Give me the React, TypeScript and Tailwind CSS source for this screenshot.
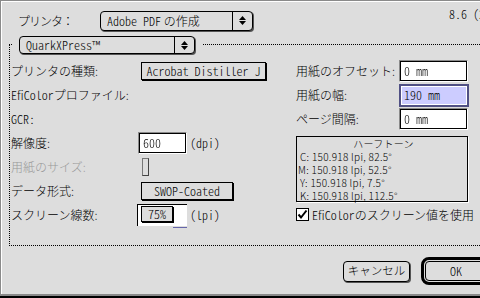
import React from 'react';

const hw = "[font-feature-settings:'hwid']";

const UpDown: React.FC = () => (
  <svg width="7" height="9" viewBox="0 0 7 9">
    <path d="M3.5 0 L7 4 L0 4 Z M0 5 L7 5 L3.5 9 Z" fill="#000" />
  </svg>
);

const Popup: React.FC<{ w: string; h: string; children: React.ReactNode }> = ({ w, h, children }) => (
  <div className={`${w} ${h} shrink-0 flex border border-black rounded-[4px] shadow-[1px_1px_0_#555] bg-[#dddddd]`}>
    <div className="flex-1 flex items-center pl-[6px] whitespace-nowrap">{children}</div>
    <div className="w-[20px] flex items-center justify-center border-l border-black">
      <UpDown />
    </div>
  </div>
);

const Button: React.FC<{ w: string; children: React.ReactNode }> = ({ w, children }) => (
  <div className={`${w} h-[18px] shrink-0 flex items-center justify-center border border-black bg-[#dddddd] shadow-[1px_1px_0_#000] whitespace-nowrap ${hw}`}>
    {children}
  </div>
);

// sunken white text field
const Field: React.FC<{ w: string; children?: React.ReactNode }> = ({ w, children }) => (
  <div className={`${w} h-[22px] shrink-0 border-t border-l border-[#8a8a8a] border-r-white border-b-white border-r border-b`}>
    <div className="h-full flex items-center border border-black bg-white pl-[3px] whitespace-nowrap">
      <span className={`text-black [will-change:opacity] ${hw}`}>{children}</span>
    </div>
  </div>
);

const Row: React.FC<{ children: React.ReactNode; className?: string }> = ({ children, className = '' }) => (
  <div className={`h-[24px] flex items-center whitespace-nowrap ${className}`}>{children}</div>
);

const App: React.FC = () => {
  return (
    <div className="w-[480px] h-[298px] bg-black overflow-hidden font-['Noto_Sans_CJK_JP',sans-serif] font-light text-[12px] leading-none text-black">
      <div className="h-[296px] border-t border-l border-b-2 border-[#8a8a8a] bg-[#dddddd]">
        <div className="h-full border-t border-l border-white overflow-hidden">
          {/* printer popup */}
          <div className="mt-[8px] flex items-center h-[21px]">
            <div className="w-[98px] shrink-0 pl-[16px] tracking-[-1px]">プリンタ：</div>
            <Popup w="w-[153px]" h="h-[20px]">
              <span className={hw}>Adobe PDF</span>
              <span>&nbsp;の作成</span>
            </Popup>
            <div className={`ml-[196px] -mt-[14px] shrink-0 whitespace-nowrap ${hw}`}>8.6 (2</div>
          </div>

          {/* group box */}
          <div className="mt-[13px] ml-[7px] mr-[-10px] h-[202px] border border-r-0 border-dotted border-black">
            <div className="-mt-[9px] ml-[3px] w-fit bg-[#dddddd] pl-[6px] pr-[7px]">
              <Popup w="w-[176px]" h="h-[18px]">
                <span className={hw}>QuarkXPress™</span>
              </Popup>
            </div>

            <div className="mt-[5px] flex">
              {/* left column */}
              <div className="w-[286px] shrink-0 pl-[1px]">
                <Row>
                  <div className="w-[130px] shrink-0">プリンタの種類:</div>
                  <Button w="w-[125px]">Acrobat Distiller J</Button>
                </Row>
                <Row>
                  <div><span className={hw}>EfiColor</span>プロファイル:</div>
                </Row>
                <Row>
                  <div className={hw}>GCR:</div>
                </Row>
                <Row>
                  <div className="w-[127px] shrink-0">解像度:</div>
                  <Field w="w-[49px]">600</Field>
                  <span className={`ml-[3px] ${hw}`}>(dpi)</span>
                </Row>
                <Row>
                  <div className="w-[131px] shrink-0 text-[#999999]">用紙のサイズ:</div>
                  <div className="w-[7px] h-[18px] shrink-0 border border-[#777] border-r-[#444] border-b-[#444] bg-[#dddddd]" />
                </Row>
                <Row>
                  <div className="w-[130px] shrink-0">データ形式:</div>
                  <Button w="w-[92px]">SWOP-Coated</Button>
                </Row>
                <Row>
                  <div className="w-[126px] shrink-0">スクリーン線数:</div>
                  <div className="relative w-[50px] h-[22px] shrink-0 border-t border-l border-black bg-white pl-[3px] pt-[1px]">
                    <div className={`w-[32px] h-[16px] flex items-center justify-center border border-black shadow-[1px_1px_0_#000] bg-[#dddddd] ${hw}`}>
                      75%
                    </div>
                    <div className="absolute right-0 -bottom-[2px] w-[14px] h-[1px] bg-[#6666aa]" />
                  </div>
                  <span className={`ml-[3px] ${hw}`}>(lpi)</span>
                </Row>
              </div>

              {/* right column */}
              <div className="w-[200px] shrink-0">
                <Row>
                  <div className="w-[103px] shrink-0">用紙のオフセット:</div>
                  <Field w="w-[69px]">0 mm</Field>
                </Row>
                <Row>
                  <div className="w-[103px] shrink-0">用紙の幅:</div>
                  <div className="w-[70px] h-[23px] shrink-0 border-2 border-[#505084] bg-white p-[1px]">
                    <div className={`h-full flex items-center bg-[#ccccff] pl-[2px] ${hw}`}>190 mm</div>
                  </div>
                </Row>
                <Row>
                  <div className="w-[103px] shrink-0">ページ間隔:</div>
                  <Field w="w-[69px]">0 mm</Field>
                </Row>
                <div className="mt-[5px] w-[172px] h-[66px] border border-black shadow-[1px_1px_0_#fff] text-[10px] leading-[13px] tracking-[0.3px] pl-[3px]">
                  <div className="text-center">ハーフトーン</div>
                  <div>C: 150.918 lpi, 82.5°</div>
                  <div className="-ml-[2px]">M: 150.918 lpi, 52.5°</div>
                  <div>Y: 150.918 lpi, 7.5°</div>
                  <div>K: 150.918 lpi, 112.5°</div>
                </div>
                <div className="mt-[6px] flex items-center whitespace-nowrap">
                  <svg width="13" height="13" viewBox="0 0 13 13" className="shrink-0">
                    <rect x="0.5" y="0.5" width="12" height="12" fill="#fff" stroke="#000" />
                    <path d="M2.5 6.5 L5 9.5 L10.5 2.5" fill="none" stroke="#000" strokeWidth="2" />
                  </svg>
                  <span className="ml-[3px]">
                    <span className={hw}>EfiColor</span>のスクリーン値を使用
                  </span>
                </div>
              </div>
            </div>
          </div>

          {/* buttons */}
          <div className="mt-[11px] flex items-center pl-[341px]">
            <div className="w-[67px] h-[21px] shrink-0 flex items-center justify-center whitespace-nowrap text-[11.5px] border border-black rounded-[4px] shadow-[1px_1px_0_#555] bg-[#dddddd]">
              キャンセル
            </div>
            <div className="ml-[11px] shrink-0 w-[70px] h-[28px] rounded-[8px] border-[3px] border-black p-[1px]">
              <div className={`h-full flex items-center justify-center border border-black rounded-[4px] ${hw}`}>OK</div>
            </div>
          </div>
        </div>
      </div>
    </div>
  );
};

export default App;
